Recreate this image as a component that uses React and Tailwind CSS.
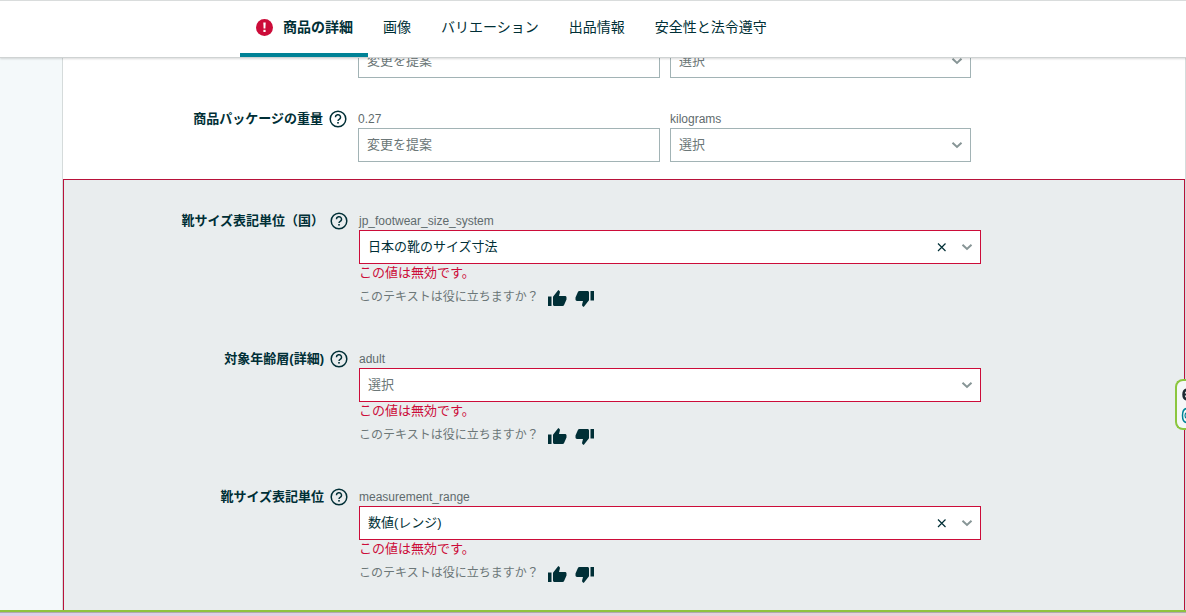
import React from "react";

const tabs = ["画像", "バリエーション", "出品情報", "安全性と法令遵守"];

function HelpIcon() {
  return (
    <svg viewBox="0 0 18 18" className="block size-[18px]" fill="none" aria-hidden="true">
      <circle cx="9" cy="9" r="7.8" stroke="#002f36" strokeWidth="1.5" />
      <path d="M6.5 7.3a2.5 2.500 0 1 1 3.700 2.100c-.8.5-1.200.9-1.200 1.700" stroke="#002f36" strokeWidth="1.4" />
      <rect x="8.2" y="12" width="1.6" height="1.600" fill="#002f36" />
    </svg>
  );
}

function Chevron() {
  return (
    <svg viewBox="0 0 12 8" className="block h-2 w-3" fill="none" aria-hidden="true">
      <path d="M1.500 1.800 6 6l4.500-4.200" stroke="#879596" strokeWidth="2" />
    </svg>
  );
}

function Thumb({ down }) {
  return (
    <svg viewBox="0 0 20 20" className={down ? "block size-5 rotate-180" : "block size-5"} fill="#002f36" aria-hidden="true">
      <path d="M1 8.500h3.500v9.500H1zM6 8.700 11.300 2l1 .7c.6.5.8 1.100.6 1.800L12 8h6c.8 0 1.500.6 1.500 1.400v2.200L17.200 16.800c-.3.8-.9 1.200-1.700 1.200H7.500c-.9 0-1.500-.6-1.500-1.500z" />
    </svg>
  );
}

function Field({ label, id, children }) {
  return (
    <div className="flex justify-start">
      <div className="flex h-[22px] w-[295px] shrink-0 items-center justify-end gap-1.5 pr-[11px]">
        {label && (
          <>
            <label htmlFor={id} className="text-[13px] leading-5 font-bold whitespace-nowrap">
              {label}
            </label>
            <button type="button" aria-label={label + " ヘルプ"}>
              <HelpIcon />
            </button>
          </>
        )}
      </div>
      {children}
    </div>
  );
}

function Hint({ children }) {
  return <div className="h-5 text-[12px] leading-[22px] text-[#5f6b6d]">{children}</div>;
}

function Suggest({ id, label }) {
  return (
    <input
      id={id}
      type="text"
      aria-label={label}
      placeholder="変更を提案"
      className="block h-[34px] w-full border border-[#a2b3b5] bg-white px-2 pb-0.5 text-[13px] outline-none placeholder:text-[#6c7778]"
    />
  );
}

function Picker({ id, label, value, error }) {
  return (
    <div className="grid">
      <select
        id={id}
        aria-label={label}
        defaultValue={value || "選択"}
        className={
          "col-start-1 row-start-1 h-[34px] w-full appearance-none border bg-white px-2 text-[13px] outline-none " +
          (error ? "border-[#cc0c39] " : "border-[#a2b3b5] ") +
          (value ? "text-[#002f36]" : "text-[#6c7778]")
        }
      >
        <option>選択</option>
        {value && <option>{value}</option>}
      </select>
      <div className="pointer-events-none col-start-1 row-start-1 flex items-center gap-3.5 justify-self-end pr-2">
        {value && (
          <button type="button" aria-label="クリア" className="pointer-events-auto">
            <svg viewBox="0 0 10 10" className="block size-[10px]" fill="none" aria-hidden="true">
              <path d="M1 1.500l7.500 7.500M8.500 1.500l-7.500 7.500" stroke="#002f36" strokeWidth="1.200" />
            </svg>
          </button>
        )}
        <Chevron />
      </div>
    </div>
  );
}

function PairFields({ id, label, hints }) {
  return (
    <>
      <div className="w-[302px]">
        {hints && <Hint>{hints[0]}</Hint>}
        <Suggest id={id} label={label} />
      </div>
      <div className="ml-2.5 w-[301px]">
        {hints && <Hint>{hints[1]}</Hint>}
        <Picker label={label + " 単位"} />
      </div>
    </>
  );
}

function ErrorField({ id, label, hint, value }) {
  return (
    <Field id={id} label={label}>
      <div className="w-[622px]">
        <Hint>{hint}</Hint>
        <Picker id={id} value={value} error />
        <p className="h-[18px] text-[13px] leading-[18px] text-[#cc0c39]">この値は無効です。</p>
        <div className="flex h-[30px] items-center gap-2">
          <span className="text-[12px] text-[#6c7778]">このテキストは役に立ちますか？</span>
          <button type="button" aria-label="はい" className="pt-0.5">
            <Thumb />
          </button>
          <button type="button" aria-label="いいえ" className="pt-1">
            <Thumb down />
          </button>
        </div>
      </div>
    </Field>
  );
}

export default function App() {
  return (
    <div className="flex h-screen flex-col overflow-hidden bg-[#f4f9fa] font-['Liberation_Sans','Noto_Sans_CJK_JP',sans-serif] text-[#002f36]">
      <header className="z-10 h-[58px] shrink-0 border-t border-b border-t-[#d9dcdc] border-b-[#cfd3d3] bg-white shadow-[0_1px_2px_rgba(0,0,0,0.15)]">
        <nav className="flex h-full items-stretch pl-[240px] text-[14px] whitespace-nowrap">
          <a href="#details" className="flex w-32 items-center gap-2.5 border-b-4 border-[#008296] pl-4 font-bold">
            <svg viewBox="0 0 17 17" className="size-[17px]" aria-hidden="true">
              <circle cx="8.500" cy="8.500" r="8.500" fill="#cc0c39" />
              <path d="M7.300 3.500h2.400l-.3 6H7.600z" fill="#fff" />
              <rect x="7.400" y="10.800" width="2.200" height="2.200" fill="#fff" />
            </svg>
            商品の詳細
          </a>
          {tabs.map((t) => (
            <a key={t} href={"#" + t} className="flex items-center border-b-4 border-transparent px-[15px]">
              {t}
            </a>
          ))}
        </nav>
      </header>
      <main className="ml-[62px] flex min-h-0 flex-1 flex-col overflow-hidden border-x border-[#d5dbdb] bg-white">
        <div className="-mt-3.5 shrink-0 pb-[17px]">
          <Field>
            <PairFields id="size" label="変更を提案" />
          </Field>
          <div className="pt-[30px]">
            <Field id="weight" label="商品パッケージの重量">
              <PairFields id="weight" label="商品パッケージの重量" hints={["0.27", "kilograms"]} />
            </Field>
          </div>
        </div>
        <section className="flex flex-1 flex-col gap-9 border border-b-0 border-[#b8123a] bg-[#e9edee] pt-[30px]">
          <ErrorField id="system" label="靴サイズ表記単位（国）" hint="jp_footwear_size_system" value="日本の靴のサイズ寸法" />
          <ErrorField id="age" label="対象年齢層(詳細)" hint="adult" />
          <ErrorField id="unit" label="靴サイズ表記単位" hint="measurement_range" value="数値(レンジ)" />
        </section>
      </main>
      <div className="h-[6px] shrink-0 border-t-2 border-[#8fc33f] bg-linear-to-r from-[#dccfe8] to-[#ecd3d3]">
        <div className="h-px bg-[#b0a8b0]" />
      </div>
      <button
        type="button"
        aria-label="サポート"
        className="absolute top-[379px] right-0 z-20 h-[51px] w-[11px] overflow-hidden rounded-l-lg border-2 border-r-0 border-[#8cc63f] bg-[#f5f8f8]"
      >
        <svg viewBox="0 0 9 47" className="block h-[47px] w-[9px]" fill="none" aria-hidden="true">
          <path d="M11 8.500c-3 0-4.500 2-4.500 5s1.500 5 4.500 5" stroke="#1f2a33" strokeWidth="2.500" />
          <path d="M6.500 13.500H10" stroke="#1f2a33" strokeWidth="2" />
          <path d="M10 27.500c-3 0-4.500 2.500-4.500 7s1.500 7 4.500 7" stroke="#008296" strokeWidth="1.500" />
          <path d="M10 31.500c-1.500.5-2 1.500-2 3s.5 2.500 2 3" stroke="#008296" strokeWidth="1.200" />
        </svg>
      </button>
    </div>
  );
}
